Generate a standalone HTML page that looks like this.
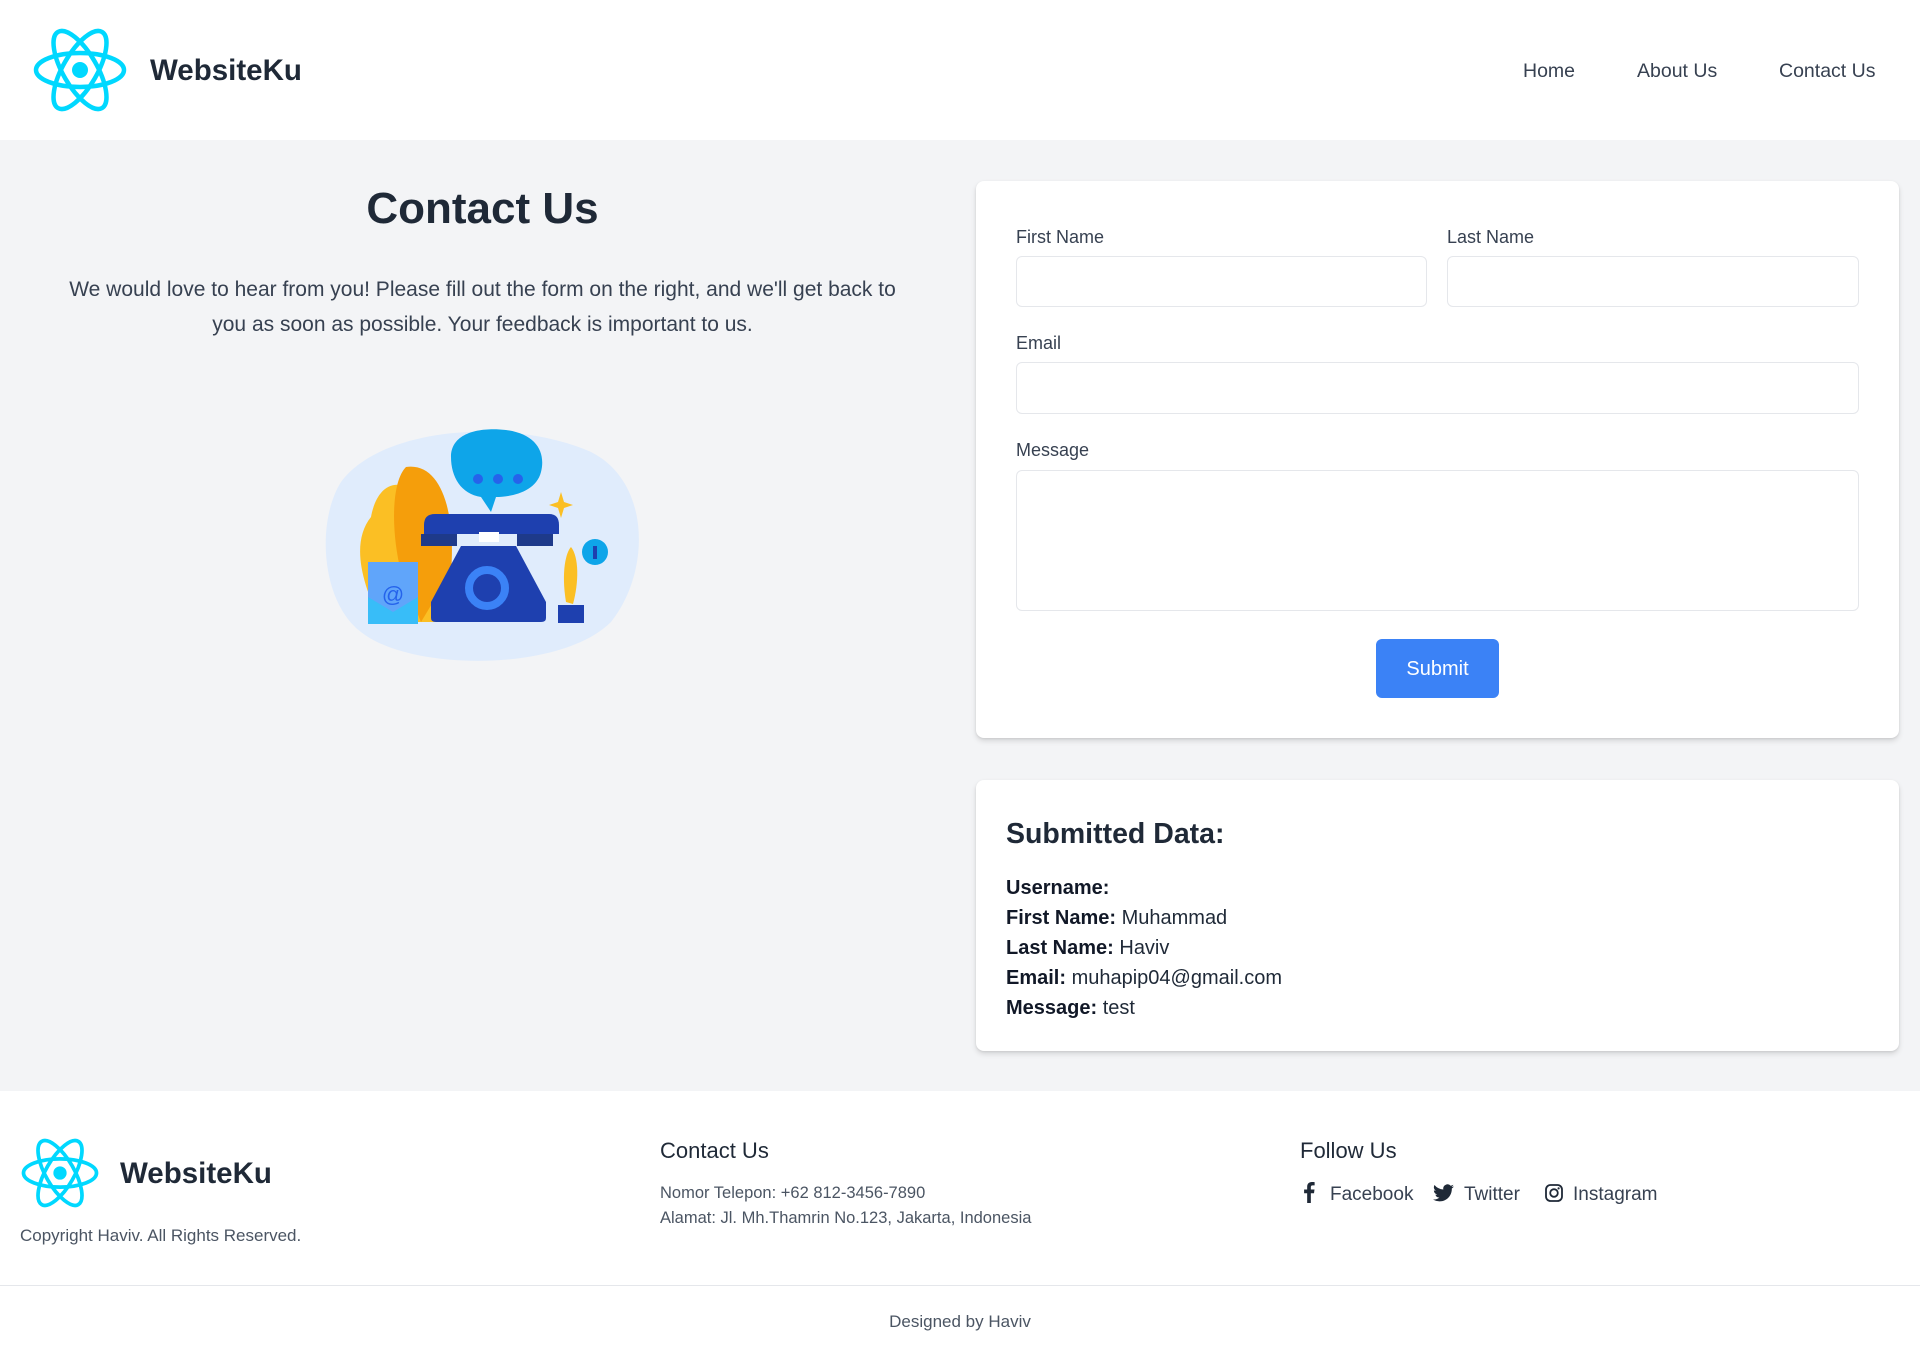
<!DOCTYPE html>
<html><head><meta charset="utf-8"><style>
*{box-sizing:border-box;margin:0;padding:0}
body{width:1920px;height:1372px;font-family:"Liberation Sans",sans-serif;color:#1f2937;background:#fff;overflow:hidden;position:relative}
.abs{position:absolute}
header{position:absolute;left:0;top:0;width:1920px;height:140px;background:#fff}
.brand{font-weight:bold;color:#1f2937}
.nav a{position:absolute;top:60px;font-size:19.5px;color:#374151;text-decoration:none}
main{position:absolute;left:0;top:140px;width:1920px;height:951px;background:#f3f4f6}
.card{position:absolute;background:#fff;border-radius:8px;box-shadow:0 3px 6px rgba(0,0,0,.12),0 1px 2px rgba(0,0,0,.08)}
label{position:absolute;font-size:18px;color:#374151}
.inp{position:absolute;border:1px solid #e5e7eb;border-radius:6px;background:#fff}
.sd{position:absolute;left:1006px;font-size:20px;color:#1f2937}
.sd b{color:#111827}
footer{position:absolute;left:0;top:1091px;width:1920px;height:281px;background:#fff}
</style></head><body>
<header>
<svg class="abs" style="left:33px;top:27px" width="94" height="86" viewBox="-47 -43 94 86"><g fill="none" stroke="#00d8ff" stroke-width="4.5"><ellipse rx="44" ry="17"/><ellipse rx="44" ry="17" transform="rotate(60)"/><ellipse rx="44" ry="17" transform="rotate(120)"/></g><circle r="8" fill="#00d8ff"/></svg>
<div class="abs brand" style="left:150px;top:54px;font-size:29.5px">WebsiteKu</div>
<div class="nav"><a style="left:1523px">Home</a><a style="left:1637px">About Us</a><a style="left:1779px">Contact Us</a></div>
</header>
<main>
<div class="abs" style="left:0;width:965px;top:44px;text-align:center;font-size:44px;font-weight:bold;color:#1f2937">Contact Us</div>
<div class="abs" style="left:50px;width:865px;top:132px;text-align:center;font-size:21px;line-height:35px;color:#374151">We would love to hear from you! Please fill out the form on the right, and we'll get back to you as soon as possible. Your feedback is important to us.</div>
<svg class="abs" style="left:321px;top:282px" width="322" height="245" viewBox="0 0 322 245">
<path d="M20 60 C60 5 190 -5 270 30 C330 60 330 150 290 200 C240 250 90 250 40 210 C0 180 -5 100 20 60Z" fill="#dbeafe" opacity=".8"/>
<path d="M50 95 C60 40 110 60 115 120 L120 200 L60 200 C40 160 30 120 50 95Z" fill="#fbbf24"/>
<path d="M85 45 C120 40 135 90 130 150 L100 200 L80 150 C70 110 70 60 85 45Z" fill="#f59e0b"/>
<path d="M130 35 C130 10 160 5 185 8 C215 12 225 30 220 50 C215 70 190 75 175 75 L170 90 L160 75 C140 72 130 55 130 35Z" fill="#0ea5e9"/>
<circle cx="157" cy="57" r="5" fill="#2563eb"/><circle cx="177" cy="57" r="5" fill="#2563eb"/><circle cx="197" cy="57" r="5" fill="#2563eb"/>
<path d="M103 103 Q103 92 114 92 L228 92 Q238 92 238 103 L238 112 L103 112Z" fill="#1e40af"/>
<rect x="100" y="112" width="36" height="12" fill="#1e3a8a"/><rect x="196" y="112" width="36" height="12" fill="#1e3a8a"/>
<rect x="158" y="110" width="20" height="10" fill="#fff"/>
<path d="M140 124 L195 124 L225 180 L225 196 Q225 200 220 200 L115 200 Q110 200 110 196 L110 180Z" fill="#1e40af"/>
<circle cx="166" cy="166" r="18" fill="none" stroke="#3b82f6" stroke-width="8"/>
<rect x="47" y="140" width="50" height="62" fill="#60a5fa"/><text x="72" y="180" font-size="22" fill="#2563eb" text-anchor="middle" font-family="Liberation Sans">@</text>
<path d="M47 175 L72 190 L97 175 L97 202 L47 202Z" fill="#38bdf8"/>
<path d="M245 180 C240 150 245 130 250 125 C258 135 258 160 252 182Z" fill="#fbbf24"/>
<rect x="237" y="183" width="26" height="18" fill="#1e40af"/>
<circle cx="274" cy="130" r="13" fill="#0ea5e9"/><rect x="272" y="124" width="4" height="13" fill="#1e40af"/>
<path d="M240 70 L243 80 L252 83 L243 86 L240 96 L237 86 L228 83 L237 80Z" fill="#fbbf24"/>
</svg>
<div class="card" style="left:976px;top:41px;width:923px;height:557px">
<label style="left:40px;top:46px">First Name</label>
<label style="left:471px;top:46px">Last Name</label>
<div class="inp" style="left:40px;top:75px;width:411px;height:51px"></div>
<div class="inp" style="left:471px;top:75px;width:412px;height:51px"></div>
<label style="left:40px;top:152px">Email</label>
<div class="inp" style="left:40px;top:181px;width:843px;height:52px"></div>
<label style="left:40px;top:259px">Message</label>
<div class="inp" style="left:40px;top:289px;width:843px;height:141px"></div>
<div class="abs" style="left:400px;top:458px;width:123px;height:59px;background:#3b82f6;border-radius:6px;color:#fff;font-size:20px;text-align:center;line-height:61px">Submit</div>
</div>
<div class="card" style="left:976px;top:640px;width:923px;height:271px"></div>
<div class="abs" style="left:1006px;top:678px;font-size:28.5px;font-weight:bold;color:#1f2937">Submitted Data:</div>
<div class="sd" style="top:737px"><b>Username:</b></div>
<div class="sd" style="top:767px"><b>First Name:</b> Muhammad</div>
<div class="sd" style="top:797px"><b>Last Name:</b> Haviv</div>
<div class="sd" style="top:827px"><b>Email:</b> muhapip04@gmail.com</div>
<div class="sd" style="top:857px"><b>Message:</b> test</div>
</main>
<footer>
<svg class="abs" style="left:21px;top:45px" width="78" height="74" viewBox="-47 -43 94 86"><g fill="none" stroke="#00d8ff" stroke-width="4.5"><ellipse rx="44" ry="17"/><ellipse rx="44" ry="17" transform="rotate(60)"/><ellipse rx="44" ry="17" transform="rotate(120)"/></g><circle r="8" fill="#00d8ff"/></svg>
<div class="abs brand" style="left:120px;top:66px;font-size:29.5px">WebsiteKu</div>
<div class="abs" style="left:20px;top:135px;font-size:17px;color:#4b5563">Copyright Haviv. All Rights Reserved.</div>
<div class="abs" style="left:660px;top:47px;font-size:22px;color:#1f2937">Contact Us</div>
<div class="abs" style="left:660px;top:90px;font-size:16.5px;color:#4b5563;line-height:25px">Nomor Telepon: +62 812-3456-7890<br>Alamat: Jl. Mh.Thamrin No.123, Jakarta, Indonesia</div>
<div class="abs" style="left:1300px;top:47px;font-size:22px;color:#1f2937">Follow Us</div>
<svg class="abs" style="left:1302px;top:90px" width="14" height="22" viewBox="0 0 10 18"><path d="M6.5 18V10h2.6l.4-3H6.5V5.1c0-.9.3-1.5 1.5-1.5H9.6V.9C9.3.9 8.4.8 7.3.8 5 .8 3.5 2.2 3.5 4.7V7H1v3h2.5v8z" fill="#1f2937"/></svg>
<div class="abs" style="left:1330px;top:93px;font-size:19px;color:#374151">Facebook</div>
<svg class="abs" style="left:1433px;top:93px" width="21" height="18" viewBox="0 0 24 20"><path d="M24 2.4a10 10 0 0 1-2.8.8A5 5 0 0 0 23.3.5a10 10 0 0 1-3.1 1.2A4.9 4.9 0 0 0 11.8 6 14 14 0 0 1 1.7.9a4.9 4.9 0 0 0 1.5 6.6A4.9 4.9 0 0 1 1 6.9a4.9 4.9 0 0 0 3.9 4.9 5 5 0 0 1-2.2.1 4.9 4.9 0 0 0 4.6 3.4A9.9 9.9 0 0 1 0 17.3 14 14 0 0 0 7.5 19.5c9.1 0 14-7.5 14-14v-.6A10 10 0 0 0 24 2.4z" fill="#1f2937"/></svg>
<div class="abs" style="left:1464px;top:93px;font-size:19px;color:#374151">Twitter</div>
<svg class="abs" style="left:1545px;top:93px" width="18" height="18" viewBox="0 0 18 18"><rect x="1" y="1" width="16" height="16" rx="4.5" fill="none" stroke="#1f2937" stroke-width="1.8"/><circle cx="9" cy="9" r="3.8" fill="none" stroke="#1f2937" stroke-width="1.8"/><circle cx="13.6" cy="4.4" r="1.1" fill="#1f2937"/></svg>
<div class="abs" style="left:1573px;top:93px;font-size:19px;color:#374151">Instagram</div>
<div class="abs" style="left:0;top:194px;width:1920px;height:1px;background:#e5e7eb"></div>
<div class="abs" style="left:0;width:1920px;top:221px;text-align:center;font-size:17px;color:#4b5563">Designed by Haviv</div>
</footer>
</body></html>
